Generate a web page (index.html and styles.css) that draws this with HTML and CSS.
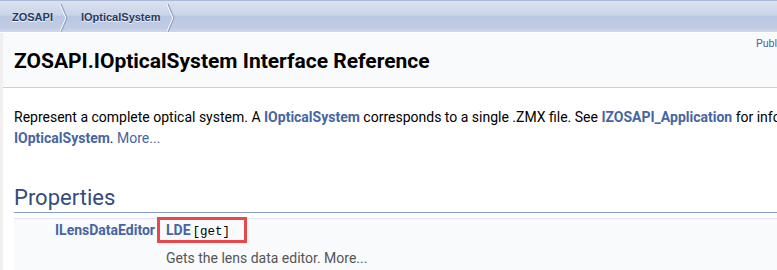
FILE: index.html
```html
<!DOCTYPE html>
<html lang="en">
<head>
  <meta charset="UTF-8">
  <title>ZOSAPI.IOpticalSystem Interface Reference</title>
  <link rel="stylesheet" href="styles.css">
</head>
<body>
  <!-- breadcrumb bar -->
  <div class="navpath">
    <ul>
      <li><a href="#">ZOSAPI</a><svg class="chev" width="9" height="30" viewBox="0 0 9 30"><polyline points="0,2 6,16 0,30" fill="none" stroke="#ffffff" stroke-width="1.2"/><polyline points="1,2 7,16 1,30" fill="none" stroke="#8ea2c8" stroke-width="1.2"/></svg></li>
      <li><a href="#">IOpticalSystem</a><svg class="chev" width="9" height="30" viewBox="0 0 9 30"><polyline points="0,2 6,16 0,30" fill="none" stroke="#ffffff" stroke-width="1.2"/><polyline points="1,2 7,16 1,30" fill="none" stroke="#8ea2c8" stroke-width="1.2"/></svg></li>
    </ul>
  </div>

  <div class="page">
    <div class="header">
      <div class="summary"><a href="#">Public Member Functions</a> | <a href="#">Properties</a></div>
      <div class="headertitle">ZOSAPI.IOpticalSystem Interface Reference</div>
    </div>

    <div class="contents">
      <p class="brief">Represent a complete optical system. A <a class="el" href="#">IOpticalSystem</a> corresponds to a single .ZMX file. See <a class="el" href="#">IZOSAPI_Application</a> for information on how to create and open a new<br><a class="el" href="#">IOpticalSystem</a>. <a class="more" href="#">More...</a></p>

      <h2 class="groupheader">Properties</h2>
      <div class="memberdecls">
        <div class="memItemLeft"><a class="el" href="#">ILensDataEditor</a></div>
        <div class="memItemRight"><span class="marked"><a class="el" href="#">LDE</a><span class="mlabel">[get]</span></span></div>
        <div class="memItemLeft"></div>
        <div class="mdescRight">Gets the lens data editor. <a class="desc-more" href="#">More...</a></div>
      </div>
    </div>
  </div>
</body>
</html>
```

FILE: styles.css
```css
html, body {
  margin: 0;
  overflow: hidden;
}
body {
  font-family: Roboto, "Liberation Sans", sans-serif;
  font-size: 14px;
  color: #000;
  background-color: #fff;
}
a {
  text-decoration: none;
  color: #4665a2;
}
a.el {
  font-weight: bold;
}

/* breadcrumb */
.navpath {
  height: 31px;
  border-top: 1px solid #a9b9da;
  border-bottom: 1px solid #fff;
  background: linear-gradient(#dae2ef 0, #cbd5e9 14px, #bac7e2 15px, #c1cce4 27px, #d1d9eb 31px);
}
.navpath ul {
  display: flex;
  margin: 0;
  padding: 0;
  list-style: none;
}
.navpath li {
  display: flex;
  align-items: center;
  height: 31px;
  padding-left: 12px;
}
.navpath li a {
  font-family: "Liberation Sans", Arial, sans-serif;
  font-size: 11px;
  font-weight: bold;
  color: #283a5d;
  text-shadow: 0 1px 1px rgba(255, 255, 255, 0.9);
  margin-right: 7px;
}
.chev {
  display: block;
}

.page {
  border-left: 3px solid #f0f0f0;
}

/* title block */
.header {
  background-color: #f9fafc;
  border-bottom: 1px solid #c4cfe5;
  padding: 5px 0 14px 11px;
}
.summary {
  padding-left: 742px;
  font-size: 10.6px;
  line-height: 11px;
  white-space: nowrap;
}
.headertitle {
  font-size: 21px;
  font-weight: bold;
  line-height: 24px;
}

.contents {
  padding-left: 11px;
}
.brief {
  margin: 19px 0 0;
  line-height: 21px;
  white-space: nowrap;
}
.groupheader {
  margin: 36px 0 0;
  padding-bottom: 1px;
  font-size: 22px;
  font-weight: normal;
  line-height: 26px;
  color: #354c7b;
  border-bottom: 1px solid #879ecb;
}

/* member table */
.memberdecls {
  display: grid;
  grid-template-columns: 144px 1fr;
  margin-top: 5px;
  border-top: 1px solid #dee4f0;
  background-color: #f9fafc;
  font-size: 14px;
  line-height: 20px;
}
.memItemLeft {
  text-align: right;
  padding: 1px 3px 0 0;
}
.memItemRight {
  padding: 1px 0 6px 8px;
}
.mdescRight {
  padding: 0 0 4px 8px;
  color: #555;
}
.desc-more {
  color: #555;
}
.mlabel {
  font-family: "Liberation Mono", monospace;
  font-size: 12.5px;
  margin-left: 2px;
}
.marked {
  position: relative;
}
.marked::after {
  content: "";
  position: absolute;
  left: -9px;
  right: -17px;
  top: -5px;
  bottom: -5px;
  border: 3px solid #e8484c;
}
```
